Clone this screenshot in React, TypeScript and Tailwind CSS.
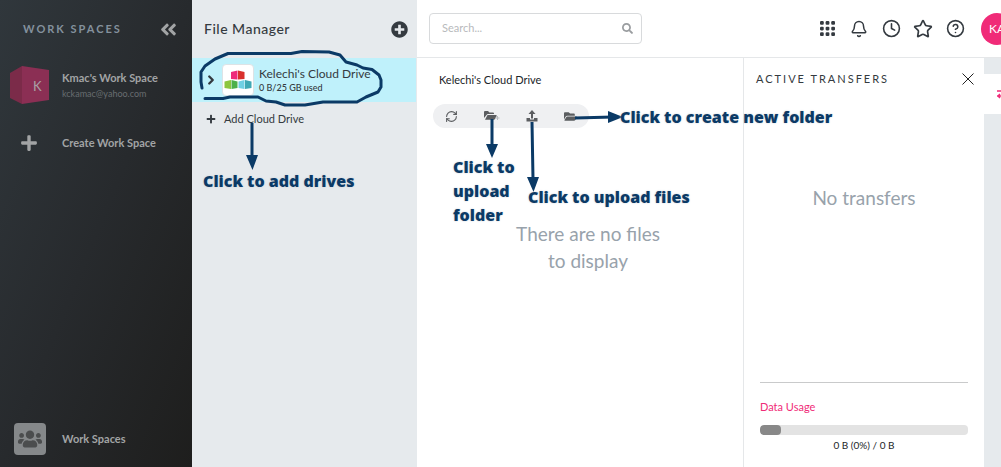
import type { ReactNode } from "react";
import {
  FaAngleDoubleLeft,
  FaFolderOpen,
  FaPlus,
  FaPlusCircle,
  FaSearch,
  FaUsers,
} from "react-icons/fa";
import { Bell, ChevronRight, CircleHelp, Clock4, RefreshCw, Star } from "lucide-react";

function WorkspaceCube() {
  return (
    <svg width="40" height="40" viewBox="0 0 40 40" aria-hidden="true" className="shrink-0">
      <path d="M0 7 12 0v38L0 32z" fill="#7b2b49" />
      <path d="M12 0 39 4v30l-27 4z" fill="#8b2f54" />
      <text x="23" y="25" fontSize="13" fill="#a9a0a5" fontFamily="Lato, sans-serif">
        K
      </text>
    </svg>
  );
}

function CubesLogo() {
  return (
    <svg width="28" height="20" viewBox="0 0 28 20" aria-hidden="true">
      <path d="M7 2 13.500 .500V9.500L7 9z" fill="#ee2a7b" />
      <path d="M14 .500 20.500 2v7L14 9.500z" fill="#d9302c" />
      <path d="M.500 11.500 7 10v9L.500 18z" fill="#8cc63f" />
      <path d="M7.500 10 13.500 11.500V18l-6 1z" fill="#4cb04a" />
      <path d="M14.500 11.500 20.500 10v9l-6-1z" fill="#6fd0e4" />
      <path d="M21 10l6.500 1.500V18L21 19z" fill="#3fa9b5" />
    </svg>
  );
}

function GridIcon() {
  return (
    <svg width="15" height="15" viewBox="0 0 16 16" fill="currentColor" aria-hidden="true">
      {[0, 6, 12].map((y) =>
        [0, 6, 12].map((x) => (
          <rect key={`${x}-${y}`} x={x} y={y} width="4" height="4" rx="1.200" />
        ))
      )}
    </svg>
  );
}

function UploadIcon() {
  return (
    <svg width="12" height="12" viewBox="0 0 12 12" fill="currentColor" aria-hidden="true">
      <path d="M6 0 9.500 4H7v4.500H5V4H2.500z" />
      <path d="M.500 8H4v1.500h4V8h3.500v3.500H.500z" />
    </svg>
  );
}

function FolderPlusIcon() {
  return (
    <svg width="16" height="12" viewBox="0 0 16 12" fill="currentColor" aria-hidden="true">
      <path d="M0 8V2q0-1 1-1h3l1.500 1.500H9q1 0 1 1V4H4Q3 4 2.500 5z" />
      <path d="M3.500 5H12q1 0 .600 1L11 9q-.400.700-1.200.700H1z" />
      <path d="M13.500 6v4M11.500 8h4" stroke="#b9bcbf" fill="none" />
    </svg>
  );
}

function HeaderButton({ label, children }: { label: string; children: ReactNode }) {
  return (
    <button type="button" aria-label={label} className="flex w-5 cursor-pointer justify-center">
      {children}
    </button>
  );
}

function Note({ className, children }: { className: string; children: ReactNode }) {
  return (
    <p
      className={`absolute font-['Open_Sans',sans-serif] text-base leading-6 font-extrabold whitespace-nowrap text-[#0b3a66] [text-shadow:0_0_2px_#c4cdd6] ${className}`}
    >
      {children}
    </p>
  );
}

function Sidebar() {
  return (
    <aside className="flex w-48 shrink-0 flex-col bg-linear-to-br from-[#30373c] via-[#272a2d] to-[#1e1e1d] text-[#a2a4a5]">
      <div className="flex h-[58px] items-center justify-between pr-3.5 pl-[23px]">
        <h2 className="text-[11px] font-bold tracking-[2px] text-[#84919d]">WORK SPACES</h2>
        <button type="button" aria-label="Collapse" className="cursor-pointer">
          <FaAngleDoubleLeft size={19} />
        </button>
      </div>
      <a href="#workspace" className="mt-2 flex items-center gap-3 pl-2.5">
        <WorkspaceCube />
        <span>
          <span className="block text-[11px] leading-4 font-bold">Kmac's Work Space</span>
          <span className="block text-[9px] leading-4 text-[#686d70]">kckamac@yahoo.com</span>
        </span>
      </a>
      <button type="button" className="mt-7 flex cursor-pointer items-center pl-5 text-[11px] font-bold">
        <FaPlus size={18} className="mr-6" />
        Create Work Space
      </button>
      <a href="#workspaces" className="mt-auto mb-3 flex items-center gap-4 pl-3.5 text-[11px] font-bold">
        <span className="flex size-8 items-center justify-center rounded-sm bg-[#85888a] text-[#4b4d4e]">
          <FaUsers size={24} />
        </span>
        Work Spaces
      </a>
    </aside>
  );
}

function FileManager() {
  return (
    <nav className="w-[225px] shrink-0 bg-[#e6eaed] text-[#343a40]">
      <div className="flex h-[58px] items-center justify-between pr-[9px] pl-3">
        <h1 className="text-sm font-medium tracking-[0.5px]">File Manager</h1>
        <button type="button" aria-label="Add" className="cursor-pointer">
          <FaPlusCircle size={17} />
        </button>
      </div>
      <a href="#drive" className="mr-px flex h-11 items-center bg-[#bff1fb] pl-3">
        <ChevronRight size={14} strokeWidth={4} className="mr-1" />
        <span className="flex size-8 items-center justify-center rounded-sm border border-[#dde3e6] bg-white">
          <CubesLogo />
        </span>
        <span className="pl-[5px]">
          <span className="block text-xs leading-4">Kelechi's Cloud Drive</span>
          <span className="block text-[9px] leading-3 font-medium">0 B/25 GB used</span>
        </span>
      </a>
      <button type="button" className="mt-[7px] flex cursor-pointer items-center gap-2 pl-3.5 text-[11px] leading-5">
        <FaPlus size={10} />
        Add Cloud Drive
      </button>
    </nav>
  );
}

function TopBar() {
  return (
    <header className="flex h-[58px] shrink-0 items-center border-b border-[#e5e7e9] pl-3 text-[#343a40]">
      <label className="flex h-[31px] w-[213px] items-center rounded-sm border border-[#d8dadc] px-2 text-[#9a9da0]">
        <input
          type="search"
          aria-label="Search"
          placeholder="Search..."
          className="min-w-0 flex-1 pl-1 text-[11px] outline-none placeholder:text-[#b8babc]"
        />
        <FaSearch size={11} />
      </label>
      <div className="-mr-3 ml-auto flex shrink-0 items-center gap-3">
        <HeaderButton label="Apps">
          <GridIcon />
        </HeaderButton>
        <HeaderButton label="Notifications">
          <Bell size={18} strokeWidth={2} />
        </HeaderButton>
        <HeaderButton label="Recent">
          <Clock4 size={19} strokeWidth={2} />
        </HeaderButton>
        <HeaderButton label="Favourites">
          <Star size={20} strokeWidth={2} />
        </HeaderButton>
        <HeaderButton label="Help">
          <CircleHelp size={19} strokeWidth={2} />
        </HeaderButton>
        <button
          type="button"
          className="ml-1 size-8 cursor-pointer rounded-full bg-[#f02b78] text-xs text-white"
        >
          KA
        </button>
      </div>
    </header>
  );
}

function Files() {
  return (
    <main className="min-w-0 flex-1 pt-3.5 pl-4">
      <h2 className="px-1.5 text-[11px] leading-4 text-[#212529]">Kelechi's Cloud Drive</h2>
      <div className="mt-4 flex h-6 w-39 items-center justify-between rounded-full bg-[#eff0f2] px-3 text-[#5b5d60]">
        <button type="button" aria-label="Refresh" className="cursor-pointer">
          <RefreshCw size={13} strokeWidth={2} />
        </button>
        <button type="button" aria-label="Upload folder" className="cursor-pointer">
          <FolderPlusIcon />
        </button>
        <button type="button" aria-label="Upload files" className="cursor-pointer">
          <UploadIcon />
        </button>
        <button type="button" aria-label="New folder" className="cursor-pointer">
          <FaFolderOpen size={13} />
        </button>
      </div>
      <p className="mx-auto mt-23 w-40 text-center text-[19px] leading-[27px] text-[#98a2ab]">
        There are no files to display
      </p>
    </main>
  );
}

function Transfers() {
  return (
    <section className="flex w-[241px] shrink-0 flex-col border-l border-[#e5e7e9] px-4 pb-3.5">
      <div className="-mx-1 mt-[13px] flex items-center justify-between">
        <h2 className="text-[11px] leading-4 tracking-[2px] text-[#343a40]">ACTIVE TRANSFERS</h2>
        <button type="button" aria-label="Close" className="-mr-0.5 cursor-pointer text-[#222]">
          <svg width="12" height="12" viewBox="0 0 12 12" stroke="currentColor" aria-hidden="true">
            <path d="M.500.500l11 11M11.500.500l-11 11" />
          </svg>
        </button>
      </div>
      <p className="mt-[97px] text-center text-[19px] leading-[27px] text-[#98a2ab]">No transfers</p>
      <div className="mt-auto border-t border-[#c9cacb] pt-4 text-[#212529]">
        <h3 className="text-[11px] leading-4 text-[#f02b78]">Data Usage</h3>
        <div
          role="progressbar"
          aria-label="Data Usage"
          aria-valuenow={0}
          className="mt-2.5 h-2.5 overflow-hidden rounded-sm bg-[#e3e3e3]"
        >
          <div className="h-full w-1/10 rounded-sm bg-[#888]" />
        </div>
        <p className="pt-0.5 text-center text-[10px] leading-4">0 B (0%) / 0 B</p>
      </div>
    </section>
  );
}

function Annotations() {
  return (
    <div className="pointer-events-none absolute inset-0">
      <svg width="700" height="230" viewBox="0 0 700 230" className="absolute top-0 left-0" aria-hidden="true">
        <g fill="none" stroke="#0b3a66" strokeWidth="3" strokeLinecap="round" strokeLinejoin="round">
          <path d="M202 88 201 82V72L205 66 215 59 228 53.500H291L302 51.500 329 52 340 55 346 62 357 65 363 68 372 69.500 379 75 381 80V87L378 92 366 97 357 102H323L305 105H285L276 102 266 101 258 97H230L223 98.500H205" />
          <path d="M252 123v33M492 119v27M532 122l1 57M575 118l38-1" strokeLinecap="butt" />
        </g>
        <g fill="#0b3a66">
          <path d="M246 155h12l-5.500 15zM486 144h12l-6 14zM527 177h12l-5.500 15zM608 111v12l15-6z" />
        </g>
      </svg>
      <Note className="top-[169px] left-[203px]">Click to add drives</Note>
      <Note className="top-[155px] left-[453px]">
        Click to
        <br />
        upload
        <br />
        folder
      </Note>
      <Note className="top-[185px] left-[528px]">Click to upload files</Note>
      <Note className="top-[105px] left-[620px]">Click to create new folder</Note>
    </div>
  );
}

export default function App() {
  return (
    <div className="relative flex min-h-screen overflow-hidden bg-white font-[Lato,sans-serif]">
      <Sidebar />
      <FileManager />
      <div className="flex min-w-0 flex-1 flex-col">
        <TopBar />
        <div className="flex flex-1">
          <Files />
          <Transfers />
          <div className="w-[17px] shrink-0 bg-[#e6eaed] pt-4">
            <button
              type="button"
              aria-label="Toggle transfers"
              className="flex h-10 w-full cursor-pointer items-center justify-end overflow-hidden bg-white text-[#f02b78]"
            >
              <svg width="4" height="10" viewBox="0 0 4 10" fill="none" stroke="currentColor" strokeWidth="1.500" aria-hidden="true">
                <path d="M0 2h4M4 7H0M3 5 1 7l2 2" />
              </svg>
            </button>
          </div>
        </div>
      </div>
      <Annotations />
    </div>
  );
}
